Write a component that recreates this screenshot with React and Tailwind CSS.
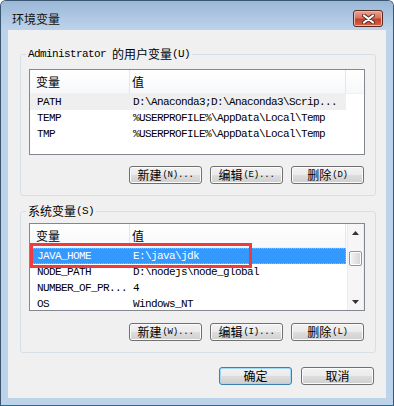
import clsx from "clsx";

const userVars = [
    ["PATH", "D:\\Anaconda3;D:\\Anaconda3\\Scrip..."],
    ["TEMP", "%USERPROFILE%\\AppData\\Local\\Temp"],
    ["TMP", "%USERPROFILE%\\AppData\\Local\\Temp"]
];

const systemVars = [
    ["JAVA_HOME", "E:\\java\\jdk"],
    ["NODE_PATH", "D:\\nodejs\\node_global"],
    ["NUMBER_OF_PR...", "4"],
    ["OS", "Windows_NT"]
];

const Zh = ({children}) => (
    <span className="font-['Noto_Sans_CJK_SC',sans-serif] text-[12px] leading-[12px] tracking-normal">{children}</span>
);

const Button = ({label, hint, primary}) => (
    <button
        className={clsx(
            "flex h-[18px] w-[73px] items-center justify-center rounded-[3px] border leading-none text-black",
            "bg-[linear-gradient(180deg,#f2f2f2_0%,#ebebeb_48%,#dddddd_52%,#cfcfcf_100%)]",
            primary
                ? "border-[#3c7fb1] shadow-[inset_0_0_0_1px_#a6d8f4]"
                : "border-[#707070] shadow-[inset_0_0_0_1px_#fbfbfb]"
        )}
    >
        <Zh>{label}</Zh>
        {hint && <span className="ml-[1px] text-[9px] tracking-[-0.2px]">{hint}</span>}
    </button>
);

const Arrow = ({down}) => (
    <svg width="7" height="4" viewBox="0 0 7 4">
        <path d={down ? "M0 0 L7 0 L3.5 4Z" : "M0 4 L3.5 0 L7 4Z"} fill="#333" />
    </svg>
);

const ScrollBar = () => (
    <div className="flex w-[17px] flex-col border-x border-[#ececec] bg-[#f6f6f6]">
        <div className="flex h-[17px] items-center justify-center">
            <Arrow />
        </div>
        <div className="h-[10px]" />
        <div className="mx-[1px] h-[15px] rounded-[2px] border border-[#959595] bg-[linear-gradient(90deg,#f4f4f4,#e4e4e4_50%,#d4d4d4)] shadow-[inset_0_0_0_1px_#fcfcfc]" />
        <div className="flex-1" />
        <div className="flex h-[17px] items-center justify-center">
            <Arrow down />
        </div>
    </div>
);

const ListView = ({rows, selected, focused, height, scroll}) => (
    <div className={clsx("flex w-[336px] overflow-hidden border border-[#828790] bg-white", height)}>
        <div className="flex-1">
            <div className="flex h-[24px] border-b border-[#eef0f2] bg-[linear-gradient(180deg,#ffffff,#f7f8fa)]">
                <div className="flex w-[100px] items-center border-r border-[#e3e6ea] pl-[6px] pt-[1px]">
                    <Zh>变量</Zh>
                </div>
                <div className="flex w-[216px] items-center border-r border-[#e3e6ea] pl-[2px] pt-[1px]">
                    <Zh>值</Zh>
                </div>
            </div>
            {rows.map(([name, value], i) => (
                <div
                    key={name}
                    className={clsx(
                        "flex h-[16px] w-[316px] items-center whitespace-pre leading-[16px]",
                        i === selected &&
                            (focused
                                ? "bg-[#3399ff] text-white outline-1 -outline-offset-1 outline-dotted outline-[#f3a24f]"
                                : "bg-[#efefef]")
                    )}
                >
                    <div className="w-[100px] pl-[7px]">{name}</div>
                    <div className="pl-[3px]">{value}</div>
                </div>
            ))}
        </div>
        {scroll && <ScrollBar />}
    </div>
);

const CloseButton = () => (
    <div className="mr-[10px] mt-[9px] flex h-[17px] w-[30px] items-center justify-center rounded-[3px] border border-[#5d2a22] bg-[linear-gradient(180deg,#e8a595_0%,#d9745f_45%,#c4422c_55%,#d2644a_100%)] shadow-[inset_0_0_0_1px_#eeb7aa]">
        <svg width="13" height="10" viewBox="0 0 13 10">
            <path d="M2 1.5 L11 8.5 M11 1.5 L2 8.5" stroke="#5a2c26" strokeWidth="4" strokeLinecap="round" />
            <path d="M2 1.5 L11 8.5 M11 1.5 L2 8.5" stroke="#ffffff" strokeWidth="2.2" strokeLinecap="round" />
        </svg>
    </div>
);

export default function App() {
    return (
        <div className="h-[406px] w-[394px] overflow-hidden rounded-t-[6px] border border-[#3a5670] border-b-[#2b6a8a] bg-[#bdd3ea] font-['Liberation_Mono','Noto_Sans_CJK_SC',monospace] text-[11px] tracking-[-0.6px] text-black">
            <div className="flex h-[29px] justify-between bg-[linear-gradient(180deg,#9ab7d6_0%,#b0c9e4_60%,#bcd3ea_100%)]">
                <div className="pl-[11px] pt-[11px] font-['Noto_Sans_CJK_SC',sans-serif] text-[12px] leading-[14px] tracking-normal text-[#111]">
                    环境变量
                </div>
                <CloseButton />
            </div>

            <div className="mx-[7px] flex h-[368px] flex-col bg-[#f0f0f0] pl-[12px] pr-[10px] pt-[18px]">
                <fieldset className="rounded-[3px] border border-[#d5dfe5] pb-[11px]">
                    <legend className="ml-[5px] flex h-[12px] items-center whitespace-pre px-[2px] leading-[12px]">
                        Administrator <Zh>的用户变量</Zh>(U)
                    </legend>
                    <div className="ml-[8px] mt-[9px]">
                        <ListView rows={userVars} selected={0} height="h-[86px]" />
                    </div>
                    <div className="mr-[11px] mt-[11px] flex justify-end gap-[8px]">
                        <Button label="新建" hint="(N)..." />
                        <Button label="编辑" hint="(E)..." />
                        <Button label="删除" hint="(D)" />
                    </div>
                </fieldset>

                <fieldset className="mt-[9px] rounded-[3px] border border-[#d5dfe5] pb-[11px]">
                    <legend className="ml-[5px] flex h-[12px] items-center px-[2px] leading-[12px]">
                        <Zh>系统变量</Zh>(S)
                    </legend>
                    <div className="relative ml-[8px] mt-[6px]">
                        <ListView rows={systemVars} selected={0} focused scroll height="h-[88px]" />
                        <div className="absolute left-[1px] top-[20px] h-[25px] w-[222px] border-[3px] border-[#ef3b3b]" />
                    </div>
                    <div className="mr-[11px] mt-[12px] flex justify-end gap-[8px]">
                        <Button label="新建" hint="(W)..." />
                        <Button label="编辑" hint="(I)..." />
                        <Button label="删除" hint="(L)" />
                    </div>
                </fieldset>

                <div className="mr-[2px] mt-[14px] flex justify-end gap-[9px]">
                    <Button label="确定" primary />
                    <Button label="取消" />
                </div>
            </div>
        </div>
    );
}
